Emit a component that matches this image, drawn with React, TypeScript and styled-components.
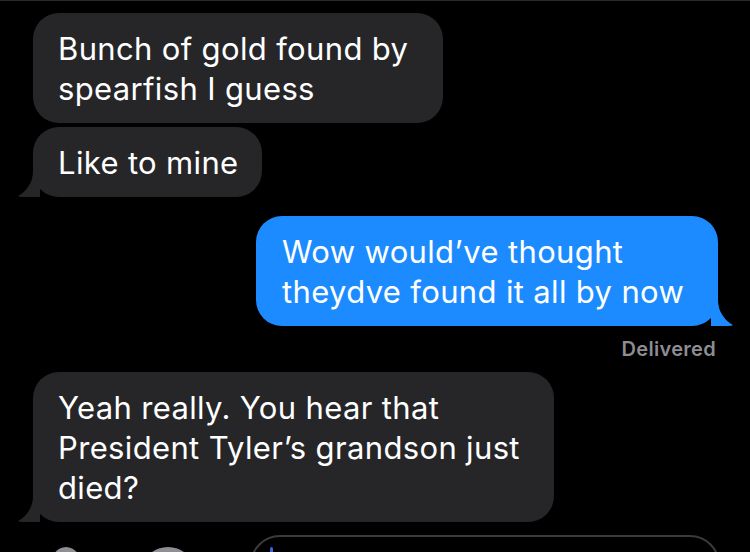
import React from "react";
import styled, { createGlobalStyle } from "styled-components";

const GlobalStyle = createGlobalStyle`
  html, body {
    margin: 0;
    padding: 0;
    background: #000;
    overflow: hidden;
  }
  body {
    font-family: Inter, "Noto Sans", "Liberation Sans", sans-serif;
    -webkit-font-smoothing: antialiased;
  }
`;

const Screen = styled.div`
  width: 750px;
  height: 552px;
  background: #000;
  border-top: 1px solid #2b2b2d;
  box-sizing: border-box;
  overflow: hidden;
  display: flex;
  flex-direction: column;
  padding: 12px 0 0;
`;

const Row = styled.div<{ $out?: boolean; $gap?: number }>`
  display: flex;
  justify-content: ${(p) => (p.$out ? "flex-end" : "flex-start")};
  padding: 0 ${(p) => (p.$out ? "32px" : "0")} 0 ${(p) => (p.$out ? "0" : "33px")};
  margin-top: ${(p) => p.$gap ?? 0}px;
`;

const Bubble = styled.div<{ $out?: boolean; $w: number }>`
  position: relative;
  width: ${(p) => p.$w}px;
  box-sizing: border-box;
  padding: 16px 0 14px ${(p) => (p.$out ? "26px" : "25px")};
  border-radius: 26px;
  background: ${(p) => (p.$out ? "#1c8bff" : "#262629")};
  color: #fff;
  font-size: 31px;
  line-height: 40px;
  letter-spacing: 0.35px;
  white-space: pre-line;
`;

const Tail = styled.svg<{ $out?: boolean }>`
  position: absolute;
  bottom: 0;
  width: 22px;
  height: 26px;
  ${(p) => (p.$out ? "right: -15px;" : "left: -15px;")}
  ${(p) => (p.$out ? "transform: scaleX(-1);" : "")}
`;

const Status = styled.div`
  align-self: flex-end;
  margin: 10px 34px 0 0;
  color: #8d8d93;
  font-size: 20px;
  font-weight: 600;
  line-height: 26px;
  letter-spacing: 0.3px;
`;

const Composer = styled.div`
  display: flex;
  align-items: flex-start;
  margin-top: 13px;
  padding-left: 50px;
`;

const Icon = styled.div<{ $w: number; $ml?: number }>`
  width: ${(p) => p.$w}px;
  height: 40px;
  margin-top: 12px;
  margin-left: ${(p) => p.$ml ?? 0}px;
  border-radius: 50% 50% 0 0;
  background: #8e8e93;
`;

const Field = styled.div`
  position: relative;
  margin-left: 58px;
  width: 470px;
  height: 60px;
  box-sizing: border-box;
  border: 2px solid #3b3b3e;
  border-radius: 30px;
`;

const Caret = styled.div`
  position: absolute;
  left: 18px;
  top: 10px;
  width: 3px;
  height: 30px;
  border-radius: 2px;
  background: #3d63e0;
`;

const BubbleTail = ({ out, color }: { out?: boolean; color: string }) => (
  <Tail $out={out} viewBox="0 0 22 26">
    <path d="M15 0 L22 0 L22 26 L5 26 Q1 26 0 25 Q6 22 10 16 Q15 9 15 0 Z" fill={color} />
  </Tail>
);

type Msg = { text: string; out?: boolean; w: number; gap: number; tail?: boolean };

const messages: Msg[] = [
  { text: "Bunch of gold found by\nspearfish I guess", w: 410, gap: 0 },
  { text: "Like to mine", w: 229, gap: 4, tail: true },
  { text: "Wow would\u2019ve thought\ntheydve found it all by now", out: true, w: 462, gap: 19, tail: true },
];

export default function App() {
  return (
    <>
      <GlobalStyle />
      <Screen>
        {messages.map((m, i) => (
          <Row key={i} $out={m.out} $gap={m.gap}>
            <Bubble $out={m.out} $w={m.w}>
              {m.text}
              {m.tail && <BubbleTail out={m.out} color={m.out ? "#1c8bff" : "#262629"} />}
            </Bubble>
          </Row>
        ))}
        <Status>Delivered</Status>
        <Row $gap={10}>
          <Bubble $w={521}>
            {"Yeah really. You hear that\nPresident Tyler\u2019s grandson just\ndied?"}
            <BubbleTail color="#262629" />
          </Bubble>
        </Row>
        <Composer>
          <Icon $w={32} />
          <Icon $w={48} $ml={62} />
          <Field>
            <Caret />
          </Field>
        </Composer>
      </Screen>
    </>
  );
}
